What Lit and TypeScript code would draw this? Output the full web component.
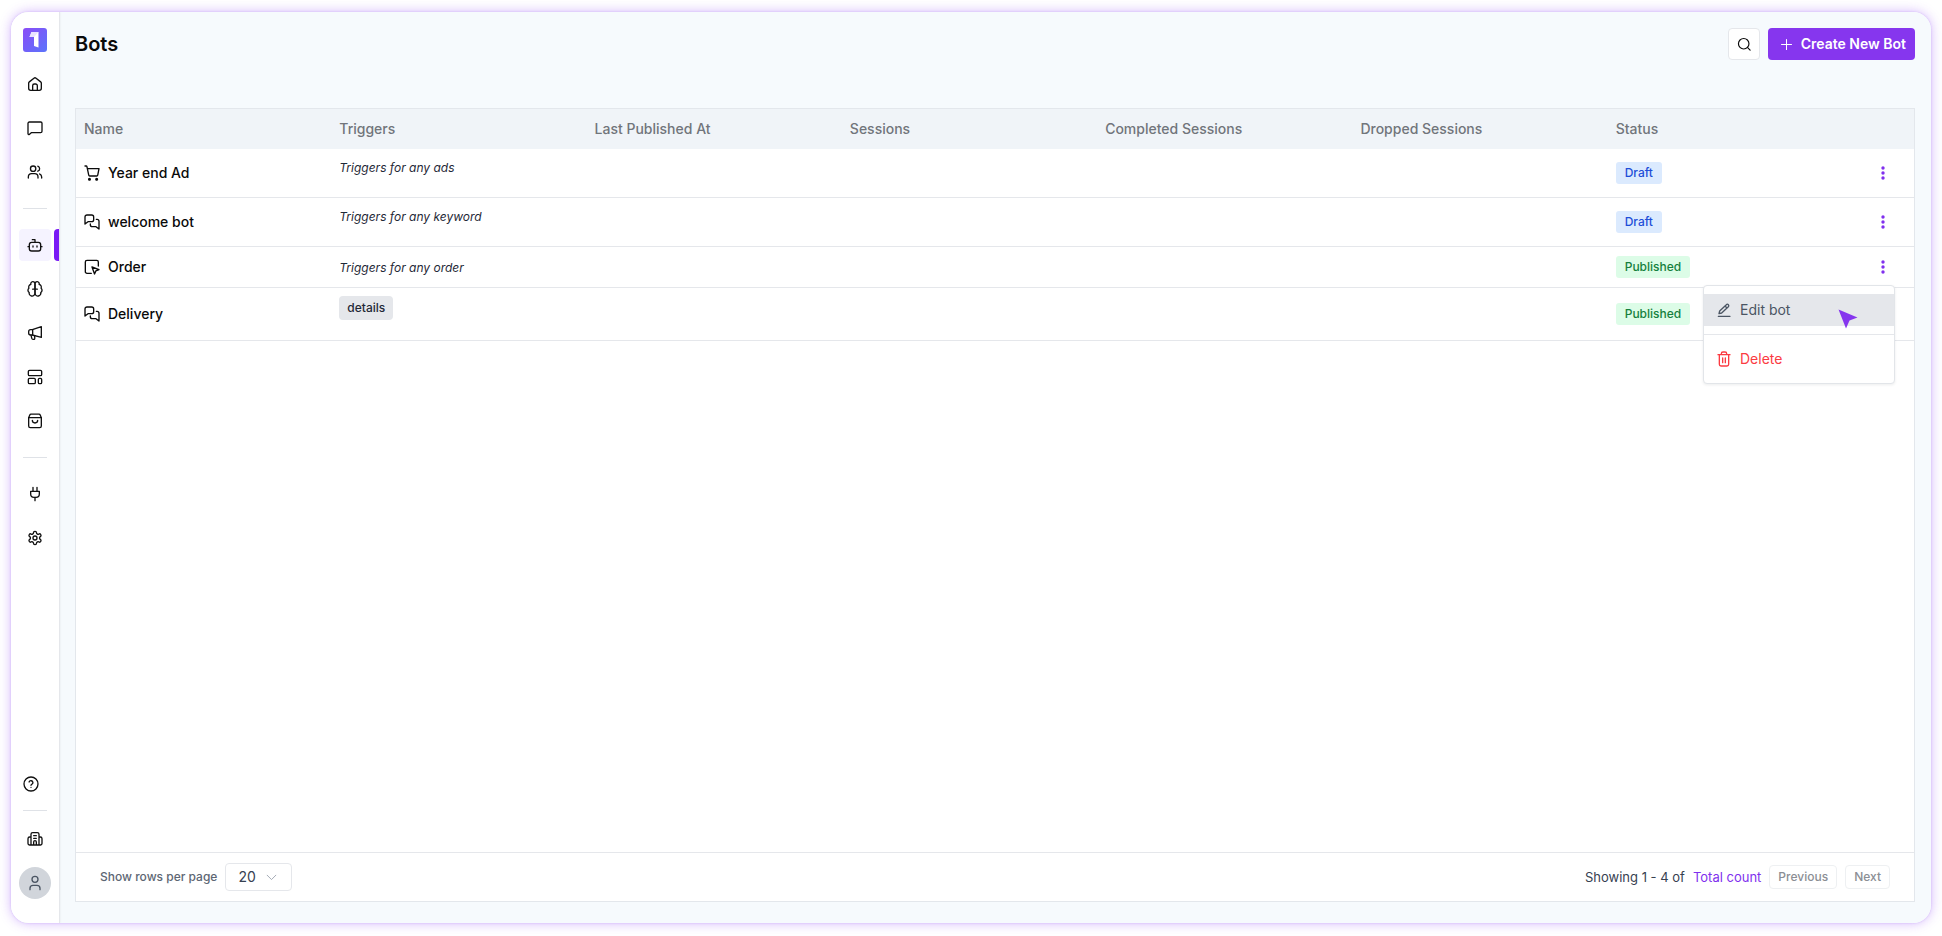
import { LitElement, html, css, svg } from "lit";
import { customElement, property, state } from "lit/decorators.js";
import { classMap } from "lit/directives/class-map.js";

const ICONS: Record<string, unknown> = {
  home: svg`<path d="M2.500 10.800a2.500 2.500 0 0 1 1-2l6.900-5.500a2.500 2.500 0 0 1 3.200 0l6.900 5.500a2.500 2.500 0 0 1 1 2V18.500a3 3 0 0 1-3 3h-13a3 3 0 0 1-3-3z"/><path d="M8.500 21.500v-7A2.500 2.500 0 0 1 11 12h2a2.500 2.500 0 0 1 2.500 2.500v7"/>`,
  chat: svg`<path d="M22.500 5a2 2 0 0 0-2-2h-17a2 2 0 0 0-2 2v15.600c0 1.100 1 1.600 1.900 1l3-2.600h14.100a2 2 0 0 0 2-2z"/>`,
  users: svg`<path d="M16.500 21v-1.500a5 5 0 0 0-5-5h-4.500a5 5 0 0 0-5 5V21"/><circle cx="9.200" cy="7" r="4"/><path d="M22 21v-1.500a5 5 0 0 0-3.200-4.600M16.200 3.200a4 4 0 0 1 0 7.600"/>`,
  bot: svg`<path d="M12 8V4H8"/><rect width="17" height="13" x="3.500" y="8" rx="3.500"/><path d="M1.500 14.500h2M20.500 14.500h2M15 13.500v1.500M9 13.500v1.500"/>`,
  brain: svg`<path d="M12 4.500a3.200 3.200 0 1 0-6.200.600 4.200 4.200 0 0 0-3 5.600 4.200 4.200 0 0 0 .500 6.600A4 4 0 0 0 12 19Z"/><path d="M12 4.500a3.200 3.200 0 1 1 6.200.600 4.200 4.200 0 0 1 3 5.600 4.200 4.200 0 0 1-.500 6.600A4 4 0 0 1 12 19Z"/><path d="M8.500 12.300h7"/>`,
  megaphone: svg`<path d="M21.500 2.500 8 7H5.500a3 3 0 0 0-3 3v2a3 3 0 0 0 3 3H8l13.500 3.500z"/><path d="M8.500 7v8M6 15.200l1.200 4.900a1.900 1.900 0 0 0 1.800 1.400h1.200a1.500 1.500 0 0 0 1.500-1.800L11.200 16"/>`,
  layout: svg`<rect width="20" height="8" x="2" y="2" rx="1.800"/><rect width="10.500" height="8" x="2" y="14" rx="1.800"/><rect width="5" height="8" x="17" y="14" rx="1.800"/>`,
  bag: svg`<path d="M2.500 7v12.500A2.500 2.500 0 0 0 5 22h14a2.500 2.500 0 0 0 2.500-2.500V7"/><path d="M2.500 7l1.700-4A2 2 0 0 1 6 1.800h12a2 2 0 0 1 1.800 1.200L21.500 7z"/><path d="M16 11a4 4 0 0 1-8 0"/>`,
  plug: svg`<path d="M12 22v-5M9 8V2M15 8V2"/><path d="M18.500 8v4a5 5 0 0 1-5 5h-3a5 5 0 0 1-5-5V8Z"/>`,
  gear: svg`<path d="M12.220 2h-.440a2 2 0 0 0-2 2v.180a2 2 0 0 1-1 1.730l-.430.250a2 2 0 0 1-2 0l-.150-.080a2 2 0 0 0-2.730.730l-.220.380a2 2 0 0 0 .730 2.730l.150.100a2 2 0 0 1 1 1.720v.510a2 2 0 0 1-1 1.740l-.150.090a2 2 0 0 0-.730 2.730l.220.380a2 2 0 0 0 2.730.730l.150-.080a2 2 0 0 1 2 0l.430.250a2 2 0 0 1 1 1.730V20a2 2 0 0 0 2 2h.440a2 2 0 0 0 2-2v-.180a2 2 0 0 1 1-1.730l.430-.250a2 2 0 0 1 2 0l.150.080a2 2 0 0 0 2.730-.730l.220-.390a2 2 0 0 0-.730-2.730l-.150-.080a2 2 0 0 1-1-1.740v-.500a2 2 0 0 1 1-1.740l.150-.090a2 2 0 0 0 .730-2.730l-.220-.380a2 2 0 0 0-2.730-.730l-.150.080a2 2 0 0 1-2 0l-.430-.250a2 2 0 0 1-1-1.730V4a2 2 0 0 0-2-2z"/><circle cx="12" cy="12" r="3"/>`,
  help: svg`<circle cx="12" cy="12" r="10.500"/><path d="M9.100 9a3 3 0 0 1 5.800 1c0 2-2.900 2.600-2.900 4M12 17h.010"/>`,
  building: svg`<path d="M6 21V5a2.500 2.500 0 0 1 2.500-2.500h7A2.500 2.500 0 0 1 18 5v16M6 9H4A2.500 2.500 0 0 0 1.500 11.500v7A2.500 2.500 0 0 0 4 21h16a2.500 2.500 0 0 0 2.500-2.500v-7A2.500 2.500 0 0 0 20 9H18M10 7h4M10 11h4M10 21v-4.500a2 2 0 0 1 4 0V21"/>`,
  person: svg`<circle cx="12" cy="6.500" r="4.500"/><path d="M19.500 22v-2a4.500 4.500 0 0 0-4.500-4.500H9A4.500 4.500 0 0 0 4.500 20v2"/>`,
  cart: svg`<circle cx="8.200" cy="21.500" r="1.300" fill="currentColor"/><circle cx="19" cy="21.500" r="1.300" fill="currentColor"/><path d="M1.500 1.500h1.600a1.300 1.300 0 0 1 1.300 1l2.700 12.700a1.600 1.600 0 0 0 1.600 1.300h10.300a1.600 1.600 0 0 0 1.600-1.300L22.500 5.500H5"/>`,
  chats: svg`<path d="M14.500 8.500a3 3 0 0 1-3 3H6l-4.500 3.500V4.500a3 3 0 0 1 3-3h7a3 3 0 0 1 3 3z"/><path d="M18.500 8h1a3 3 0 0 1 3 3v11.500l-4.500-3.500h-5.500a3 3 0 0 1-3-3V15"/>`,
  pointer: svg`<path d="m12 12 10.500 3.800-4.700 2-2 4.700z"/><path d="M21.500 10.500V4.500a2.500 2.500 0 0 0-2.500-2.500H4.500A2.500 2.500 0 0 0 2 4.500v14.500a2.500 2.500 0 0 0 2.500 2.500h6.500"/>`,
  search: svg`<circle cx="11.500" cy="11.500" r="9"/><path d="m22.500 22.500-4.600-4.600"/>`,
  plus: svg`<path d="M4 12h16M12 4v16"/>`,
  pen: svg`<path d="M3.500 21.500h17.500M15.500 4a2.100 2.100 0 0 1 3 3L8.500 16.500l-4 1 1-4zM13.500 6l3 3"/>`,
  trash: svg`<path d="M3 5.500h18M19 5.500V20a2.500 2.500 0 0 1-2.500 2.500h-9A2.500 2.500 0 0 1 5 20V5.500M8 5.500V4a2.500 2.500 0 0 1 2.500-2.500h3A2.500 2.500 0 0 1 16 4v1.500M10 10.500v7M14 10.500v7"/>`,
  chevron: svg`<path d="m2.500 7 9.500 9.500L21.500 7"/>`,
};

@customElement("ui-icon")
class UiIcon extends LitElement {
  @property() name = "";
  @property({ type: Number }) size = 16;
  @property({ type: Number }) stroke = 2;
  static styles = css`
    :host { display: inline-flex; flex: none; }
    svg { display: block; fill: none; stroke: currentColor; stroke-linecap: round; stroke-linejoin: round; overflow: visible; }
  `;
  render() {
    return html`<svg width=${this.size} height=${this.size} viewBox="0 0 24 24" stroke-width=${this.stroke} aria-hidden="true">${ICONS[this.name]}</svg>`;
  }
}

@customElement("app-sidebar")
class AppSidebar extends LitElement {
  static styles = css`
    :host {
      display: flex; flex-direction: column; align-items: center; box-sizing: border-box;
      width: 48px; flex: none; padding: 16px 0 24px; background: #fff; color: #111;
      box-shadow: 1px 0 0 #e5e7eb, 1px 0 2px rgba(15, 23, 42, 0.08);
    }
    .logo { display: block; height: 24px; margin-bottom: 16px; }
    .group { display: flex; flex-direction: column; gap: 12px; width: 100%; align-items: center; }
    .item { display: grid; place-items: center; width: 32px; height: 32px; border-radius: 4px; color: inherit; }
    .active { background: #f5f3ff; }
    .slot { display: flex; justify-content: center; width: 100%; position: relative; }
    .mark { position: absolute; right: 0; top: 0; width: 5px; height: 32px; background: #7a1bf5; border-radius: 4px 0 0 4px; }
    .rule { width: 24px; height: 1px; border: 0; margin: 20px 0; background: #dfe2e7; flex: none; }
    .rule.tight { margin: 18px 0 12px; }
    .spacer { flex: 1; }
    .help { display: flex; color: inherit; align-self: flex-start; margin-left: 12px; }
    .avatar { display: grid; place-items: center; width: 32px; height: 32px; padding: 0; border: 0; border-radius: 50%; background: #d1d5db; color: #4b5563; }
  `;
  link(icon: string, label: string, active = false) {
    return html`<div class="slot">
      <a href="#" class=${classMap({ item: true, active })} aria-label=${label}><ui-icon name=${icon} size="16"></ui-icon></a>
      ${active ? html`<span class="mark"></span>` : ""}
    </div>`;
  }
  render() {
    return html`
      <a class="logo" href="#" aria-label="Dashboard">
        <svg width="24" height="24" viewBox="0 0 24 24">
          <defs><linearGradient id="g" x1="0" y1="0" x2="1" y2="1"><stop offset="0" stop-color="#8b4cf7" /><stop offset="1" stop-color="#5b74fb" /></linearGradient></defs>
          <rect width="24" height="24" rx="3" fill="url(#g)" />
          <path d="M8.500 4h7v15.500L11 18V9H6.500z" fill="#fff" />
          <path d="M8.500 4h7L11 9H6.500z" fill="#e9e4ff" />
        </svg>
      </a>
      <nav class="group">${this.link("home", "Home")}${this.link("chat", "Chats")}${this.link("users", "Contacts")}</nav>
      <hr class="rule" />
      <nav class="group">
        ${this.link("bot", "Bots", true)}${this.link("brain", "AI")}${this.link("megaphone", "Campaigns")}${this.link("layout", "Templates")}${this.link("bag", "Commerce")}
      </nav>
      <hr class="rule" />
      <nav class="group">${this.link("plug", "Integrations")}${this.link("gear", "Settings")}</nav>
      <div class="spacer"></div>
      <a class="help" href="#" aria-label="Help"><ui-icon name="help" size="16"></ui-icon></a>
      <hr class="rule tight" />
      <div class="group">
        ${this.link("building", "Organization")}
        <button class="avatar" aria-label="Account"><ui-icon name="person" size="16"></ui-icon></button>
      </div>
    `;
  }
}

interface Bot { icon: string; name: string; trigger: string; tag?: boolean; short?: boolean; status: string; }

const BOTS: Bot[] = [
  { icon: "cart", name: "Year end Ad", trigger: "Triggers for any ads", status: "Draft" },
  { icon: "chats", name: "welcome bot", trigger: "Triggers for any keyword", status: "Draft" },
  { icon: "pointer", name: "Order", trigger: "Triggers for any order", short: true, status: "Published" },
  { icon: "chats", name: "Delivery", trigger: "details", tag: true, status: "Published" },
];
const COLUMNS = ["Name", "Triggers", "Last Published At", "Sessions", "Completed Sessions", "Dropped Sessions", "Status"];

@customElement("app-root")
class AppRoot extends LitElement {
  @state() openRow = 2;
  static styles = css`
    :host { display: flex; box-sizing: border-box; min-height: 100vh; padding: 12px 11px 13px; background: #fff; font-family: Inter, sans-serif; font-size: 14px; line-height: 20px; color: #0a0a0a; }
    button, select { font: inherit; color: inherit; }
    .frame { flex: 1; min-width: 0; display: flex; border-radius: 18px; box-shadow: 0 0 2px rgba(124, 58, 237, 0.25), 0 0 12px rgba(139, 60, 246, 0.38); }
    .window { flex: 1; min-width: 0; display: flex; overflow: hidden; border-radius: 18px; background: #f6fafd; }
    main { flex: 1; min-width: 0; display: flex; flex-direction: column; padding: 16px 16px 21px; }
    header { display: flex; align-items: center; gap: 8px; margin-bottom: 48px; }
    h1 { flex: 1; margin: 0; font-size: 20px; line-height: 28px; font-weight: 600; }
    .search { display: grid; place-items: center; width: 32px; height: 32px; padding: 0; border: 1px solid #e5e7eb; border-radius: 4px; background: #fff; }
    .create { display: flex; align-items: center; gap: 7px; height: 32px; padding: 0 9px 0 11px; border: 0; border-radius: 4px; background: #8636ee; color: #fff; font-weight: 600; }
    .panel { flex: 1; display: flex; flex-direction: column; border: 1px solid #e3e7ec; background: #fff; }
    table { width: 100%; table-layout: fixed; border-collapse: separate; border-spacing: 0; }
    th { height: 40px; box-sizing: border-box; padding: 0 8px; background: #f0f4f8; color: #71757b; font-weight: 500; text-align: left; }
    td { padding: 8px; border-bottom: 1px solid #e5e7eb; vertical-align: middle; }
    .menu-col { width: 51px; }
    .name { display: flex; align-items: center; gap: 8px; font-weight: 500; }
    .trigger { font-size: 12px; line-height: 22px; font-style: italic; color: #1f2937; padding-bottom: 10px; }
    .short { padding: 2px 0 0; }
    .tag-wrap { padding-bottom: 12px; }
    .tag { display: block; width: fit-content; padding: 0 8px; border-radius: 4px; background: #e5e7eb; color: #1f2937; font-size: 12px; line-height: 24px; font-weight: 500; }
    .badge { display: block; width: fit-content; padding: 0 9px; border-radius: 3px; font-size: 12px; line-height: 22px; font-weight: 500; }
    .draft { background: #dbeafe; color: #1d4ed8; }
    .published { background: #dcfce7; color: #15803d; }
    .anchor { position: relative; width: 24px; height: 24px; }
    .kebab { display: grid; place-items: center; width: 24px; height: 24px; padding: 0; border: 0; background: none; color: #8030ee; }
    .menu { position: absolute; z-index: 2; top: 30px; right: 0; width: 192px; box-sizing: border-box; padding: 8px 0; border: 1px solid #e2e5e9; border-radius: 4px; background: #fff; box-shadow: 0 1px 3px rgba(15, 23, 42, 0.08); }
    .option { display: flex; align-items: center; gap: 8px; width: 100%; height: 32px; padding: 0 12px; border: 0; background: none; color: #4b5563; text-align: left; }
    .option.hover { background: #e5e7eb; }
    .option.danger { color: #fb3b42; }
    .sep { height: 1px; margin: 8px 0; border: 0; background: #e5e7eb; }
    .cursor { position: absolute; top: 23px; right: 36px; }
    .fill { flex: 1; }
    footer { display: flex; align-items: center; gap: 8px; height: 48px; padding: 0 24px; border-top: 1px solid #e5e7eb; font-size: 13px; color: #4b5563; }
    .rows { font-size: 12px; font-weight: 500; color: #5d6673; }
    .select { display: grid; align-items: center; }
    .select select, .select ui-icon { grid-area: 1 / 1; }
    .select select { appearance: none; width: 67px; height: 28px; padding: 0 12px; border: 1px solid #e5e7eb; border-radius: 4px; background: #fff; font-size: 14px; color: #374151; }
    .select ui-icon { justify-self: end; margin-right: 15px; color: #9ca3af; pointer-events: none; }
    .showing { color: #374151; }
    .total { color: #8030ee; text-decoration: none; }
    .pager { display: flex; gap: 8px; }
    .page { height: 24px; padding: 0 8px; border: 1px solid #eef0f2; border-radius: 4px; background: #fff; color: #8b8e94; font-size: 12px; line-height: 20px; font-weight: 500; }
  `;
  menu() {
    return html`<div class="menu" role="menu">
      <button class="option hover" role="menuitem"><ui-icon name="pen" size="16"></ui-icon>Edit bot</button>
      <hr class="sep" />
      <button class="option danger" role="menuitem"><ui-icon name="trash" size="16"></ui-icon>Delete</button>
      <svg class="cursor" width="20" height="20" viewBox="0 0 20 20" aria-hidden="true"><path d="M0.500 0.500 19.500 8.500 11.500 11.500 8 19.500z" fill="#8636ee" /></svg>
    </div>`;
  }
  row(bot: Bot, i: number) {
    return html`<tr>
      <td><div class="name"><ui-icon name=${bot.icon} size="16"></ui-icon><span>${bot.name}</span></div></td>
      <td>${bot.tag
        ? html`<div class="tag-wrap"><span class="tag">${bot.trigger}</span></div>`
        : html`<div class=${classMap({ trigger: true, short: !!bot.short })}>${bot.trigger}</div>`}</td>
      <td></td><td></td><td></td><td></td>
      <td><span class="badge ${bot.status.toLowerCase()}">${bot.status}</span></td>
      <td><div class="anchor">
        <button class="kebab" aria-label="Actions for ${bot.name}" @click=${() => (this.openRow = this.openRow === i ? -1 : i)}>
          <svg width="4" height="14" viewBox="0 0 4 14" fill="currentColor"><circle cx="2" cy="2" r="1.700" /><circle cx="2" cy="7" r="1.700" /><circle cx="2" cy="12" r="1.700" /></svg>
        </button>
        ${this.openRow === i ? this.menu() : ""}
      </div></td>
    </tr>`;
  }
  render() {
    return html`<div class="frame"><div class="window">
      <app-sidebar></app-sidebar>
      <main>
        <header>
          <h1>Bots</h1>
          <button class="search" aria-label="Search"><ui-icon name="search" size="14"></ui-icon></button>
          <button class="create"><ui-icon name="plus" size="15" stroke="1.7"></ui-icon>Create New Bot</button>
        </header>
        <section class="panel">
          <table>
            <thead><tr>${COLUMNS.map((c) => html`<th scope="col">${c}</th>`)}<th class="menu-col" scope="col"></th></tr></thead>
            <tbody>${BOTS.map((b, i) => this.row(b, i))}</tbody>
          </table>
          <div class="fill"></div>
          <footer>
            <label class="rows" for="rows">Show rows per page</label>
            <div class="select"><select id="rows"><option>20</option><option>50</option><option>100</option></select><ui-icon name="chevron" size="11"></ui-icon></div>
            <div class="fill"></div>
            <span class="showing">Showing 1 - 4 of</span>
            <a class="total" href="#">Total count</a>
            <div class="pager"><button class="page">Previous</button><button class="page">Next</button></div>
          </footer>
        </section>
      </main>
    </div></div>`;
  }
}
